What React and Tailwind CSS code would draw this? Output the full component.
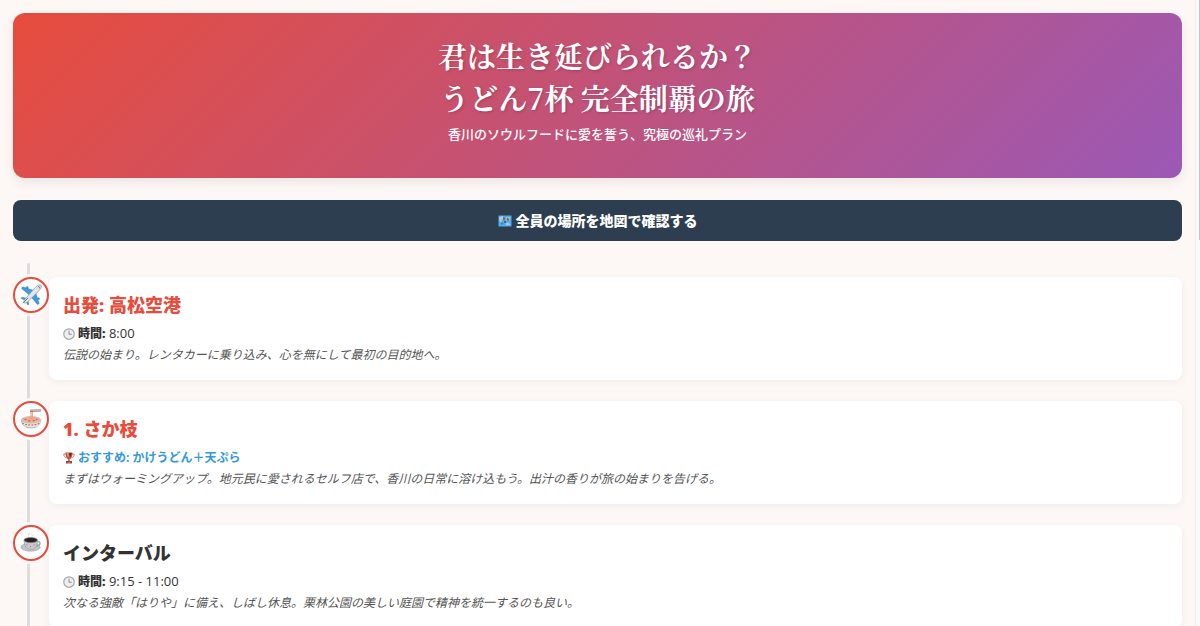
const PAGE_FONT = "font-['Open_Sans','Noto_Sans_CJK_JP',sans-serif]";

const PlaneIcon = () => (
  <svg viewBox="0 0 24 24" className="size-[22px]" aria-hidden="true">
    <g stroke="#2b78b5" strokeWidth="0.4">
      <path d="M15 7 3 3 1.600 4.800l8.800 7.600z" fill="#3d9be0" />
      <path d="m17 9 4 12.200-1.800 1.400-7.400-8.800z" fill="#3d9be0" />
      <path d="M6.200 15.200 2 14.400l-1 1.100 4.200 2.200zM8.900 17.900l.8 4.200-1.100 1-2.300-4.200z" fill="#3d96d6" />
      <path d="m6.600 3.200 1.600-.6 1 1.800-1.200.8zM20.900 17.300l.6-1.600-1.800-1-.8 1.200z" fill="#2f7fc0" />
    </g>
    <path d="M22.800 1.300c1 1 .4 3.400-1.600 5.400L9.600 18.400c-2 2-4.300 3-5.200 2.100s.1-3.200 2.100-5.200L17.400 2.900c2-2 4.400-2.600 5.400-1.600z" fill="#e3e6e9" stroke="#858d94" strokeWidth="0.700" />
    <path d="M19.500 3.100c.7-.3 1.300-.2 1.600.1s.4.900.1 1.600" fill="none" stroke="#3f5566" strokeWidth="0.900" />
    <path d="m3.200 21 5.600-5.900" stroke="#56718a" strokeWidth="1" />
  </svg>
);

const NoodleIcon = () => (
  <svg viewBox="0 0 24 24" className="size-[22px]" aria-hidden="true">
    <path d="M7 20h10v2H7z" fill="#b4b4b6" />
    <path d="M1.500 13.500c0 5 4.200 8 10.500 8s10.500-3 10.500-8z" fill="#e4e3e4" stroke="#a9a9ab" strokeWidth="0.600" />
    <path d="M2.600 16.300c4 3 14.800 3 18.800 0" fill="none" stroke="#e25a50" strokeWidth="1.300" strokeDasharray="2 1.400" />
    <ellipse cx="12" cy="12.800" rx="10.500" ry="3.600" fill="#d8cfcd" stroke="#a8a2a2" strokeWidth="0.600" />
    <ellipse cx="12" cy="12.600" rx="9.200" ry="2.800" fill="#f0a78c" />
    <path d="M5 12.500h2M9 14h2M14 13.800h2M17.500 12.500h1.500" stroke="#d9604e" strokeWidth="1.200" />
    <path d="M12 12V3M13.500 12V3" stroke="#ef9b78" strokeWidth="1.100" />
    <path d="m11 2.300 12-.3M11 3.800l12-.4" stroke="#7b5f55" strokeWidth="0.800" />
  </svg>
);

const CoffeeIcon = () => (
  <svg viewBox="0 0 24 24" className="size-[22px]" aria-hidden="true">
    <path d="M10 5c-2-2 1-2 0-4M13 5c2-2-1-2 0-3" fill="none" stroke="#c9c9c9" strokeWidth="0.800" />
    <ellipse cx="11.500" cy="16.500" rx="10.500" ry="4.500" fill="#c5c6c9" stroke="#97989b" strokeWidth="0.600" />
    <path d="M18 10.500c5-1 5.500 4.500-1 5" fill="none" stroke="#a3a3a6" strokeWidth="1.600" />
    <path d="M4.500 9c0 6 2 10 7.500 10s7-4 7-10z" fill="#c9c9cd" stroke="#8e8f93" strokeWidth="0.600" />
    <ellipse cx="11.700" cy="8.800" rx="7.300" ry="2.800" fill="#26201e" stroke="#85858a" strokeWidth="0.800" />
    <path d="M7 14h1M15 14h1M11 16h1" stroke="#b45766" strokeWidth="1" />
  </svg>
);

const ClockIcon = () => (
  <svg viewBox="0 0 24 24" className="size-3 shrink-0" aria-hidden="true">
    <circle cx="12" cy="12" r="10.500" fill="#eeeff0" stroke="#a6a9ac" strokeWidth="2.500" />
    <path d="M12 5v7.500h5.500" fill="none" stroke="#6e7276" strokeWidth="1.500" />
  </svg>
);

const TrophyIcon = () => (
  <svg viewBox="0 0 24 24" className="size-3 shrink-0" aria-hidden="true">
    <path d="M6 4H1.500c0 5 3 7 6 8M18 4h4.500c0 5-3 7-6 8" fill="none" stroke="#dc6a51" strokeWidth="1.800" />
    <path d="M5 1h14c0 8-2 12-5.500 13.500V18h-3v-3.500C7 13 5 9 5 1z" fill="#c2543f" />
    <path d="M8 2h3v9C9 9 8 6 8 2z" fill="#e9a184" />
    <path d="M12 2h5c0 3-1 6-3 8z" fill="#403430" />
    <path d="M6 18h12v5H6z" fill="#9b4134" />
    <path d="M9 20h6v1.500H9z" fill="#df8968" />
  </svg>
);

const MapIcon = () => (
  <svg viewBox="0 0 28 24" className="h-3 w-[14px] shrink-0" aria-hidden="true">
    <path d="M1 1h26v22H1z" fill="#4aaef2" />
    <path d="m2 4 8-2 2 5-4 3-2 6-3-4zM16 4l9 1-2 6-5-2-3 3zM15 17l6-2 4 4-8 2z" fill="#a9cdd8" />
    <path d="m10 4 5 2-2 5-3-2zM18 5l5 3-3 4-3-3zM5 15l6 1-3 4z" fill="#a9544e" />
    <path d="M12 12h4v4h-4z" fill="#2c6a9a" />
  </svg>
);

const stops = [
  {
    title: '出発: 高松空港',
    titleColor: 'text-[#e74c3c]',
    icon: <PlaneIcon />,
    time: '8:00',
    text: '伝説の始まり。レンタカーに乗り込み、心を無にして最初の目的地へ。',
  },
  {
    title: '1. さか枝',
    titleColor: 'text-[#e74c3c]',
    icon: <NoodleIcon />,
    recommend: 'おすすめ: かけうどん＋天ぷら',
    text: 'まずはウォーミングアップ。地元民に愛されるセルフ店で、香川の日常に溶け込もう。出汁の香りが旅の始まりを告げる。',
  },
  {
    title: 'インターバル',
    titleColor: 'text-[#333333]',
    icon: <CoffeeIcon />,
    time: '9:15 - 11:00',
    text: '次なる強敵「はりや」に備え、しばし休息。栗林公園の美しい庭園で精神を統一するのも良い。',
  },
];

const Stop = ({ stop }) => (
  <li className="flex items-start">
    {/* Marker, with a ring in the page colour that cuts the line */}
    <div className="relative flex size-9 shrink-0 items-center justify-center rounded-full border-2 border-[#e74c3c] bg-white ring-3 ring-[#fdf8f5]">
      {stop.icon}
    </div>
    <article className="relative min-w-0 flex-1 rounded-lg bg-white px-[14px] pt-[14px] pb-[15px] shadow-[0_2px_8px_rgba(0,0,0,0.05)]">
      <h2 className={`mb-1 text-lg leading-7 font-black ${stop.titleColor}`}>{stop.title}</h2>
      {stop.time && (
        <p className="flex items-center gap-[3px] text-[13px] leading-[21px] text-[#333333]">
          <ClockIcon />
          <span><strong className="text-xs font-black">時間:</strong> {stop.time}</span>
        </p>
      )}
      {stop.recommend && (
        <p className="flex items-center gap-[3px] text-xs leading-[21px] font-bold text-[#3498db]">
          <TrophyIcon />
          {stop.recommend}
        </p>
      )}
      <p className="text-xs leading-[21px] text-[#555555] italic">{stop.text}</p>
    </article>
  </li>
);

export default function App() {
  return (
    <div className={`flex h-screen overflow-hidden bg-[#fdf8f5] text-[#333333] ${PAGE_FONT}`}>
      <main className="min-w-0 flex-1 p-[13px]">
        <header className="rounded-xl bg-[linear-gradient(135deg,#e74c3c,#9b59b6)] px-6 pt-[22px] pb-[34px] text-center text-white shadow-[0_4px_12px_rgba(0,0,0,0.08)]">
          <h1 className="mb-[5px] font-['Noto_Serif_CJK_JP','Noto_Sans_CJK_JP',serif] text-[29px] leading-[42px] font-bold text-shadow-[1px_1px_3px_rgba(0,0,0,0.2)]">
            君は生き延びられるか？
            <br />
            うどん7杯 完全制覇の旅
          </h1>
          <p className="text-[13px] leading-5 font-medium">香川のソウルフードに愛を誓う、究極の巡礼プラン</p>
        </header>

        <a
          href="#map"
          className="mt-[22px] flex items-center justify-center gap-1 rounded-lg bg-[#2c3e50] py-[10px] text-sm leading-[21px] font-black text-white"
        >
          <MapIcon />
          全員の場所を地図で確認する
        </a>

        <div className="relative mt-[22px] pt-[14px]">
          <div className="absolute top-0 left-[14px] h-screen w-[3px] rounded-full bg-[#dddddd]" />
          <ol id="map" className="flex flex-col gap-[21px]">
            {stops.map((stop) => (
              <Stop key={stop.title} stop={stop} />
            ))}
          </ol>
        </div>
      </main>

      {/* Scroll track */}
      <div className="flex w-[5px] shrink-0 justify-end border-l border-[#eeeeee] bg-[#fafafa]">
        <div className="h-[240px] w-px bg-[#c1c5c8]" />
      </div>
    </div>
  );
}
